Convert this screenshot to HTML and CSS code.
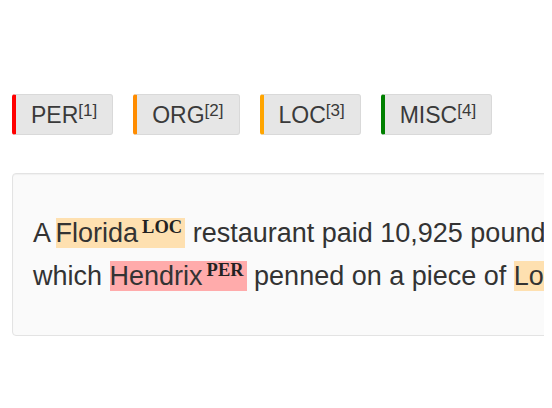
FILE: index.html
```html
<!DOCTYPE html>
<html lang="en">
<head>
<meta charset="utf-8">
<title>Entities</title>
<link rel="stylesheet" href="styles.css">
</head>
<body>
<div class="page">
  <div class="legend">
    <span class="tag tag-per">PER<sup>[1]</sup></span>
    <span class="tag tag-org">ORG<sup>[2]</sup></span>
    <span class="tag tag-loc">LOC<sup>[3]</sup></span>
    <span class="tag tag-misc">MISC<sup>[4]</sup></span>
  </div>
  <div class="well">
    <p class="doc">A <mark class="ent ent-loc ent-first">Florida<span class="lbl">LOC</span></mark> restaurant paid 10,925 pounds ($16,000) for the draft of "Ain't no telling",<br>which <mark class="ent ent-per">Hendrix<span class="lbl">PER</span></mark> penned on a piece of <mark class="ent ent-loc">London<span class="lbl">LOC</span></mark> hotel stationery in late 1966.</p>
  </div>
</div>
</body>
</html>
```

FILE: styles.css
```css
html, body {
  overflow: hidden;
}
body {
  margin: 8px;
  background: #ffffff;
  font-family: "Liberation Sans", Arial, sans-serif;
  color: #333333;
}
.page {
  padding: 86px 0 0 4px;
  width: 1200px;
}
.legend {
  display: flex;
  gap: 20px;
}
.tag {
  display: inline-block;
  font-size: 23px;
  line-height: 25px;
  padding: 8px 15px 6px 15px;
  background: #e6e6e6;
  border: 1px solid #d9d9d9;
  border-left-width: 4px;
  border-radius: 3px;
  color: #3a3a3a;
}
.tag sup {
  font-size: 17px;
  line-height: 0;
  vertical-align: 7px;
}
.tag-per { border-left-color: #ff0000; }
.tag-org { border-left-color: #ff8c00; }
.tag-loc { border-left-color: #ffa500; }
.tag-misc { border-left-color: #008000; }

.well {
  margin-top: 38px;
  width: 1100px;
  background: #fafafa;
  border: 1px solid #e3e3e3;
  border-radius: 4px;
  box-shadow: inset 0 1px 1px rgba(0, 0, 0, 0.04);
  padding: 38px 20px 37px 20px;
}
.doc {
  margin: 0;
  font-size: 27px;
  line-height: 43px;
  white-space: nowrap;
  color: #333333;
}
.ent {
  color: #333333;
  padding: 0 3px 0 0;
}
.ent-loc { background: #fee0b0; }
.ent-per { background: #ffabab; }
.ent-first { margin-left: -1.5px; }
.lbl {
  font-family: "Liberation Serif", "Times New Roman", serif;
  font-weight: bold;
  font-size: 18.5px;
  line-height: 0;
  vertical-align: 9px;
  margin-left: 4px;
  color: #222222;
}
```
